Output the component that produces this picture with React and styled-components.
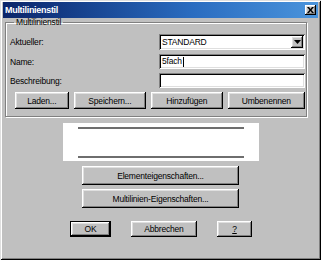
import styled, { createGlobalStyle } from 'styled-components';

const GlobalStyle = createGlobalStyle`
  html, body {
    margin: 0;
    padding: 0;
    background: #c0c0c0;
  }
  body {
    font-family: "Liberation Sans", Arial, sans-serif;
    font-size: 8.5px;
    letter-spacing: -0.2px;
    color: #000;
  }
  * {
    box-sizing: border-box;
  }
`;

const raised = `
  box-shadow: inset -1px -1px 0 #000, inset 1px 1px 0 #fff,
    inset -2px -2px 0 #808080, inset 2px 2px 0 #dfdfdf;
`;

const sunken = `
  box-shadow: inset 1px 1px 0 #808080, inset -1px -1px 0 #fff,
    inset 2px 2px 0 #000, inset -2px -2px 0 #dfdfdf;
`;

const Window = styled.div`
  width: 321px;
  height: 260px;
  background: #c0c0c0;
  padding: 2px 3px 3px;
  display: flex;
  flex-direction: column;
  box-shadow: inset 1px 1px 0 #dfdfdf, inset -1px -1px 0 #000,
    inset 2px 2px 0 #fff, inset -2px -2px 0 #808080;
`;

const TitleBar = styled.div`
  height: 16px;
  display: flex;
  align-items: center;
  justify-content: space-between;
  padding: 0 2px 0 2px;
  background: linear-gradient(to right, #0a246a 0%, #2a6cc0 60%, #4a94dc 100%);
`;

const Title = styled.span`
  color: #fff;
  font-weight: bold;
  font-size: 9px;
  letter-spacing: -0.3px;
`;

const CloseButton = styled.button`
  width: 11px;
  height: 10px;
  padding: 0;
  border: none;
  background: #c0c0c0;
  display: flex;
  align-items: center;
  justify-content: center;
  ${raised}
`;

const Group = styled.fieldset`
  margin: -1px 11px 0 2px;
  padding: 7px 1px 7px 4px;
  border: 1px solid #808080;
  box-shadow: 1px 1px 0 #fff, inset 1px 1px 0 #fff;
  min-width: 0;
  display: flex;
  flex-direction: column;
  gap: 4px;
`;

const Legend = styled.legend`
  margin-left: 4px;
  padding: 0 2px;
  line-height: 10px;
`;

const Row = styled.div`
  display: flex;
  align-items: center;
`;

const Label = styled.span`
  flex: 1;
`;

const Field = styled.div`
  width: 146px;
  height: ${(p) => p.$h || 15}px;
  background: #fff;
  display: flex;
  align-items: center;
  padding: 0 2px 0 3px;
  ${sunken}
`;

const FieldText = styled.span`
  flex: 1;
`;

const Caret = styled.span`
  display: inline-block;
  width: 1px;
  height: 10px;
  margin-left: 1px;
  background: #000;
  vertical-align: middle;
`;

const DropButton = styled.div`
  width: 12px;
  height: 12px;
  background: #c0c0c0;
  display: flex;
  align-items: center;
  justify-content: center;
  ${raised}
`;

const ButtonRow = styled.div`
  display: flex;
  margin-left: 5px;
  gap: 5px;
`;

const Button = styled.button`
  width: ${(p) => p.$w}px;
  height: ${(p) => p.$h || 17}px;
  padding: 0;
  border: ${(p) => (p.$default ? '1px solid #000' : 'none')};
  background: #c0c0c0;
  font: inherit;
  letter-spacing: inherit;
  color: #000;
  ${raised}
`;

const Preview = styled.div`
  align-self: center;
  width: 196px;
  height: 38px;
  margin-top: 6px;
  padding: 4px 15px 3px;
  background: #fff;
  display: flex;
  flex-direction: column;
  justify-content: space-between;
`;

const PreviewLine = styled.div`
  height: 2px;
  background: #6e6e6e;
`;

const PropsColumn = styled.div`
  align-self: center;
  display: flex;
  flex-direction: column;
  gap: 4px;
  margin-top: 5px;
`;

const Footer = styled.div`
  display: flex;
  gap: 20px;
  margin: 13px 0 0 67px;
`;

const Hotkey = styled.span`
  text-decoration: underline;
`;

export default function App() {
  return (
    <>
      <GlobalStyle />
      <Window>
        <TitleBar>
          <Title>Multilinienstil</Title>
          <CloseButton aria-label="Schließen">
            <svg width="7" height="6" viewBox="0 0 7 6">
              <path d="M0 0h2l1.5 2L5 0h2L4.5 3 7 6H5L3.5 4 2 6H0l2.5-3z" fill="#000" />
            </svg>
          </CloseButton>
        </TitleBar>

        <Group>
          <Legend>Multilinienstil</Legend>
          <Row>
            <Label>Aktueller:</Label>
            <Field $h={16}>
              <FieldText>STANDARD</FieldText>
              <DropButton>
                <svg width="7" height="4" viewBox="0 0 7 4">
                  <path d="M0 0h7L3.5 4z" fill="#000" />
                </svg>
              </DropButton>
            </Field>
          </Row>
          <Row>
            <Label>Name:</Label>
            <Field>
              <FieldText>
                5fach<Caret />
              </FieldText>
            </Field>
          </Row>
          <Row>
            <Label>Beschreibung:</Label>
            <Field />
          </Row>
          <ButtonRow>
            <Button $w={54}>Laden...</Button>
            <Button $w={73}>Speichern...</Button>
            <Button $w={72}>Hinzufügen</Button>
            <Button $w={78}>Umbenennen</Button>
          </ButtonRow>
        </Group>

        <Preview>
          <PreviewLine />
          <PreviewLine />
        </Preview>

        <PropsColumn>
          <Button $w={157} $h={19}>Elementeigenschaften...</Button>
          <Button $w={157} $h={19}>Multilinien-Eigenschaften...</Button>
        </PropsColumn>

        <Footer>
          <Button $w={41} $h={16} $default>OK</Button>
          <Button $w={66} $h={16}>Abbrechen</Button>
          <Button $w={35} $h={16}>
            <Hotkey>?</Hotkey>
          </Button>
        </Footer>
      </Window>
    </>
  );
}
